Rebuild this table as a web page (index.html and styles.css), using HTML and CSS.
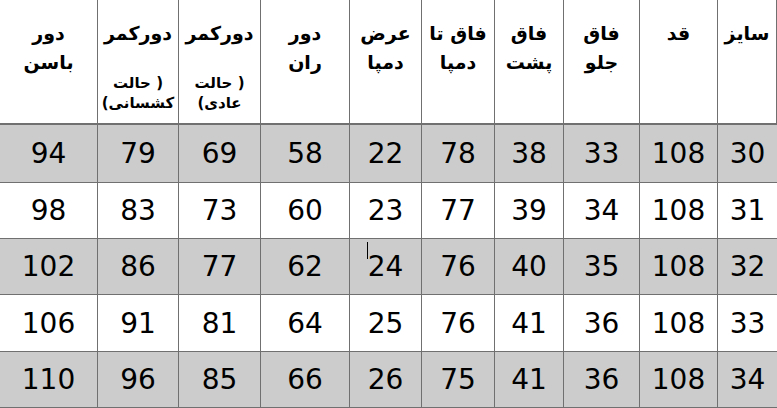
FILE: index.html
```html
<!DOCTYPE html>
<html lang="fa" dir="rtl">
<head>
<meta charset="utf-8">
<link rel="stylesheet" href="styles.css">
</head>
<body>
<div class="sheet">
  <div class="hd c1"><p class="t">سایز</p></div>
  <div class="hd"><p class="t">قد</p></div>
  <div class="hd"><p class="t">فاق<br>جلو</p></div>
  <div class="hd"><p class="t">فاق<br>پشت</p></div>
  <div class="hd"><p class="t">فاق تا<br>دمپا</p></div>
  <div class="hd"><p class="t">عرض<br>دمپا</p></div>
  <div class="hd"><p class="t">دور<br>ران</p></div>
  <div class="hd"><p class="t">دورکمر</p><p class="s">( حالت<br>عادی)</p></div>
  <div class="hd"><p class="t">دورکمر</p><p class="s">( حالت<br>کشسانی)</p></div>
  <div class="hd last"><p class="t">دور<br>باسن</p></div>

  <div class="cell g">30</div><div class="cell g">108</div><div class="cell g">33</div><div class="cell g">38</div><div class="cell g">78</div><div class="cell g">22</div><div class="cell g">58</div><div class="cell g">69</div><div class="cell g">79</div><div class="cell g last">94</div>

  <div class="cell">31</div><div class="cell">108</div><div class="cell">34</div><div class="cell">39</div><div class="cell">77</div><div class="cell">23</div><div class="cell">60</div><div class="cell">73</div><div class="cell">83</div><div class="cell last">98</div>

  <div class="cell g">32</div><div class="cell g">108</div><div class="cell g">35</div><div class="cell g">40</div><div class="cell g">76</div><div class="cell g caret-cell">24<span class="caret"></span></div><div class="cell g">62</div><div class="cell g">77</div><div class="cell g">86</div><div class="cell g last">102</div>

  <div class="cell">33</div><div class="cell">108</div><div class="cell">36</div><div class="cell">41</div><div class="cell">76</div><div class="cell">25</div><div class="cell">64</div><div class="cell">81</div><div class="cell">91</div><div class="cell last">106</div>

  <div class="cell g">34</div><div class="cell g">108</div><div class="cell g">36</div><div class="cell g">41</div><div class="cell g">75</div><div class="cell g">26</div><div class="cell g">66</div><div class="cell g">85</div><div class="cell g">96</div><div class="cell g last">110</div>
</div>
</body>
</html>
```

FILE: styles.css
```css
html, body {
  margin: 0;
  padding: 0;
  background: #ffffff;
}

.sheet {
  direction: rtl;
  width: 777px;
  height: 408px;
  display: grid;
  grid-template-columns: 60px 78px 76px 69px 73px 72px 89px 82px 81px 97px;
  grid-template-rows: 125px 58px 56px 56px 57px 56px;
  font-family: "DejaVu Sans", sans-serif;
  color: #000;
}

.hd {
  box-sizing: border-box;
  border-left: 1px solid #707070;
  border-bottom: 2px solid #707070;
  padding-top: 19px;
  text-align: center;
  font-weight: bold;
}

.hd.c1 {
  border-right: 1px solid #707070;
}

.hd .t {
  margin: 0;
  font-size: 19px;
  line-height: 29px;
}

.hd .s {
  margin: 25px 0 0;
  font-size: 15px;
  line-height: 20px;
}

.cell {
  box-sizing: border-box;
  border-left: 1px solid #707070;
  border-bottom: 1px solid #707070;
  display: flex;
  align-items: center;
  justify-content: center;
  font-size: 28px;
  background: #ffffff;
}

.cell.g {
  background: #cccccc;
}

.last {
  border-left: none;
}

.caret-cell {
  position: relative;
}

.caret {
  position: absolute;
  left: 17px;
  top: 3px;
  width: 1px;
  height: 17px;
  background: #000;
}
```
